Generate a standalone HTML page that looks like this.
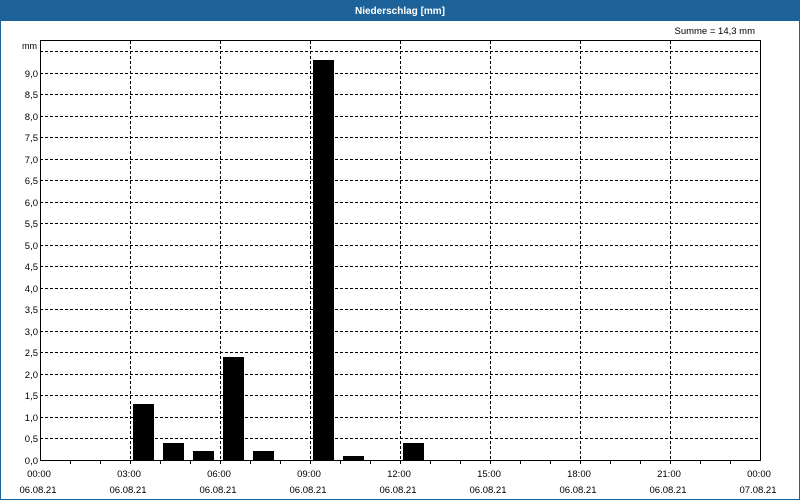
<!DOCTYPE html>
<html><head><meta charset="utf-8"><style>
html,body{margin:0;padding:0;background:#fff}
svg{display:block;font-family:"Liberation Sans",sans-serif}
</style></head><body>
<svg width="800" height="500" viewBox="0 0 800 500" xmlns="http://www.w3.org/2000/svg">
<rect x="0" y="0" width="800" height="500" fill="#1d6399"/>
<rect x="1" y="21" width="798" height="478" fill="#fff"/>
<text x="400" y="14" fill="#fff" font-size="10" font-weight="bold" text-anchor="middle">Niederschlag [mm]</text>
<text x="755" y="34" fill="#000" font-size="9.5" text-anchor="end">Summe = 14,3 mm</text>
<text x="37" y="49" fill="#000" font-size="9" text-anchor="end">mm</text>
<g stroke="#000" stroke-width="1" stroke-dasharray="3,2" shape-rendering="crispEdges" fill="none">
<path d="M40 51.5H760M40 73.5H760M40 94.5H760M40 116.5H760M40 137.5H760M40 159.5H760M40 180.5H760M40 202.5H760M40 223.5H760M40 245.5H760M40 266.5H760M40 288.5H760M40 309.5H760M40 331.5H760M40 352.5H760M40 374.5H760M40 395.5H760M40 417.5H760M40 438.5H760"/>
<path d="M130.5 41V460M220.5 41V460M310.5 41V460M400.5 41V460M490.5 41V460M580.5 41V460M670.5 41V460"/>
</g>
<g fill="#000" shape-rendering="crispEdges">
<rect x="133" y="404" width="21" height="56"/>
<rect x="163" y="443" width="21" height="17"/>
<rect x="193" y="451" width="21" height="9"/>
<rect x="223" y="357" width="21" height="103"/>
<rect x="253" y="451" width="21" height="9"/>
<rect x="313" y="60" width="21" height="400"/>
<rect x="343" y="456" width="21" height="4"/>
<rect x="403" y="443" width="21" height="17"/>
</g>
<g stroke="#000" stroke-width="1" fill="none" shape-rendering="crispEdges">
<rect x="40.5" y="40.5" width="720" height="420"/>
<path d="M70.5 460V464M100.5 460V464M130.5 460V464M160.5 460V464M190.5 460V464M220.5 460V464M250.5 460V464M280.5 460V464M310.5 460V464M340.5 460V464M370.5 460V464M400.5 460V464M430.5 460V464M460.5 460V464M490.5 460V464M520.5 460V464M550.5 460V464M580.5 460V464M610.5 460V464M640.5 460V464M670.5 460V464M700.5 460V464M730.5 460V464"/>
</g>
<g fill="#000" font-size="9.5" text-anchor="end">
<text x="38" y="464">0,0</text><text x="38" y="442">0,5</text><text x="38" y="421">1,0</text><text x="38" y="399">1,5</text><text x="38" y="378">2,0</text><text x="38" y="356">2,5</text><text x="38" y="335">3,0</text><text x="38" y="313">3,5</text><text x="38" y="292">4,0</text><text x="38" y="270">4,5</text><text x="38" y="249">5,0</text><text x="38" y="227">5,5</text><text x="38" y="206">6,0</text><text x="38" y="184">6,5</text><text x="38" y="163">7,0</text><text x="38" y="141">7,5</text><text x="38" y="120">8,0</text><text x="38" y="98">8,5</text><text x="38" y="77">9,0</text>
</g>
<g fill="#000" font-size="9.5" text-anchor="middle">
<text x="39" y="477">00:00</text><text x="38" y="493">06.08.21</text>
<text x="129" y="477">03:00</text><text x="128" y="493">06.08.21</text>
<text x="219" y="477">06:00</text><text x="218" y="493">06.08.21</text>
<text x="309" y="477">09:00</text><text x="308" y="493">06.08.21</text>
<text x="399" y="477">12:00</text><text x="398" y="493">06.08.21</text>
<text x="489" y="477">15:00</text><text x="488" y="493">06.08.21</text>
<text x="579" y="477">18:00</text><text x="578" y="493">06.08.21</text>
<text x="669" y="477">21:00</text><text x="668" y="493">06.08.21</text>
<text x="759" y="477">00:00</text><text x="758" y="493">07.08.21</text>
</g>
</svg>
</body></html>
